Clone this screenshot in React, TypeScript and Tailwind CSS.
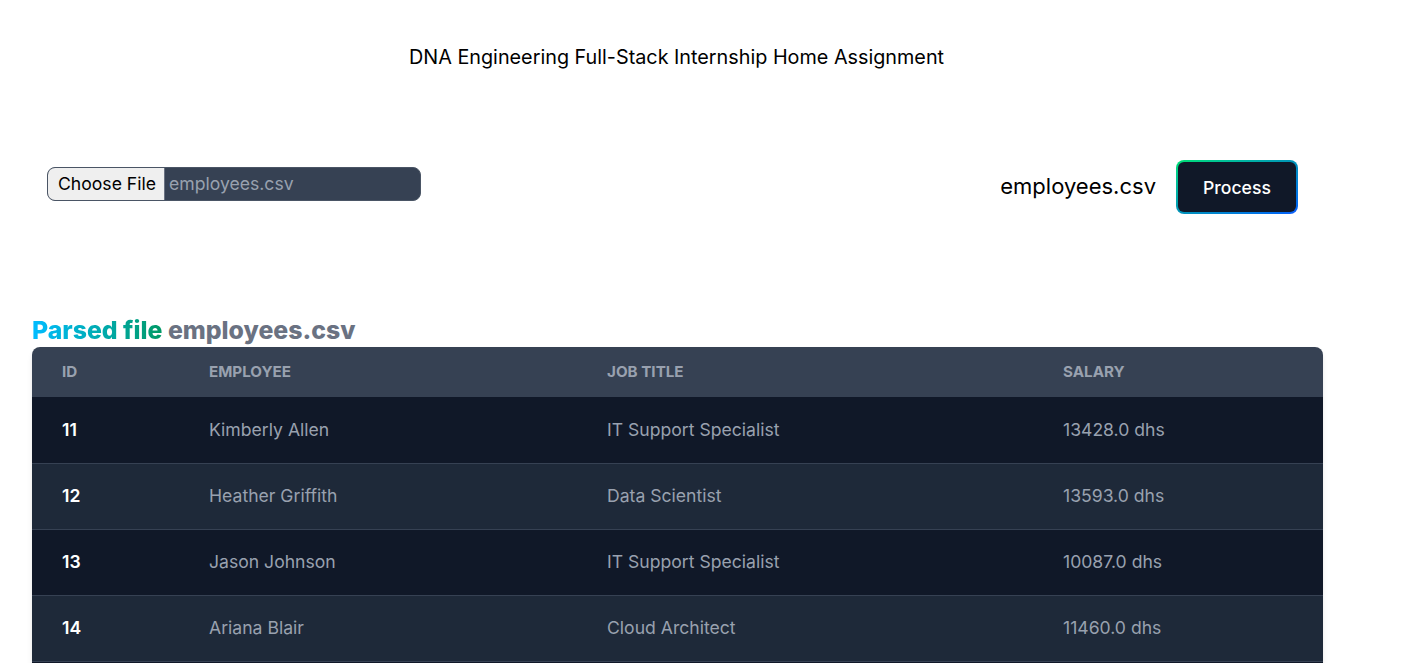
import React from "react";

const rows = [
  { id: 11, name: "Kimberly Allen", job: "IT Support Specialist", salary: "13428.0 dhs" },
  { id: 12, name: "Heather Griffith", job: "Data Scientist", salary: "13593.0 dhs" },
  { id: 13, name: "Jason Johnson", job: "IT Support Specialist", salary: "10087.0 dhs" },
  { id: 14, name: "Ariana Blair", job: "Cloud Architect", salary: "11460.0 dhs" },
  { id: 15, name: "Michael Brown", job: "Software Engineer", salary: "12000.0 dhs" },
];

export default function App() {
  return (
    <div className="min-h-screen bg-white font-['Inter',sans-serif] text-black">
      <div className="pt-[44px] pl-[409px]">
        <h1 className="text-[19.8px] leading-[26px] font-normal">DNA Engineering Full-Stack Internship Home Assignment</h1>
      </div>
      <div className="mt-[90px] flex items-start pl-[47px] pr-[118px]">
        <div className="mt-[7px] flex h-[34px] w-[374px] items-center overflow-hidden rounded-lg border border-gray-600 bg-gray-700 text-[17.6px]">
          <div className="flex h-full items-center border-r border-gray-500 bg-[#efefef] pl-[10px] pr-[8px] text-black">Choose File</div>
          <span className="pl-[4px] text-gray-400">employees.csv</span>
        </div>
        <div className="flex-1" />
        <div className="flex items-center gap-[20px]">
          <span className="-mt-[2px] text-[22px]">employees.csv</span>
          <div className="rounded-lg bg-gradient-to-br from-green-400 via-cyan-600 to-blue-600 p-[2px]">
            <div className="flex h-[50px] w-[118px] items-center justify-center rounded-[6px] bg-gray-900 pt-[2px] text-[17.6px] font-medium text-white">Process</div>
          </div>
        </div>
      </div>
      <div className="mt-[102px] pl-[32px] pr-[93px]">
        <h2 className="text-[24.8px] leading-[28px] font-extrabold">
          <span className="bg-gradient-to-r from-sky-400 to-emerald-600 bg-clip-text text-transparent">Parsed file</span>{" "}
          <span className="text-gray-500">employees.csv</span>
        </h2>
        <div className="mt-[3px] overflow-hidden rounded-t-lg shadow-md">
          <table className="w-full text-left text-[17.6px]">
            <thead className="bg-gray-700 text-[15.2px] font-bold uppercase text-gray-400">
              <tr className="h-[50px]">
                <th className="w-[177px] pl-[30px]">ID</th>
                <th className="w-[398px]">Employee</th>
                <th className="w-[456px]">Job Title</th>
                <th>Salary</th>
              </tr>
            </thead>
            <tbody>
              {rows.map((r, i) => (
                <tr
                  key={r.id}
                  className={`h-[66px] border-b border-gray-700 ${i % 2 === 0 ? "bg-gray-900" : "bg-gray-800"}`}
                >
                  <td className="pl-[30px] font-semibold text-white">{r.id}</td>
                  <td className="text-gray-400">{r.name}</td>
                  <td className="text-gray-400">{r.job}</td>
                  <td className="text-gray-400">{r.salary}</td>
                </tr>
              ))}
            </tbody>
          </table>
        </div>
      </div>
    </div>
  );
}
